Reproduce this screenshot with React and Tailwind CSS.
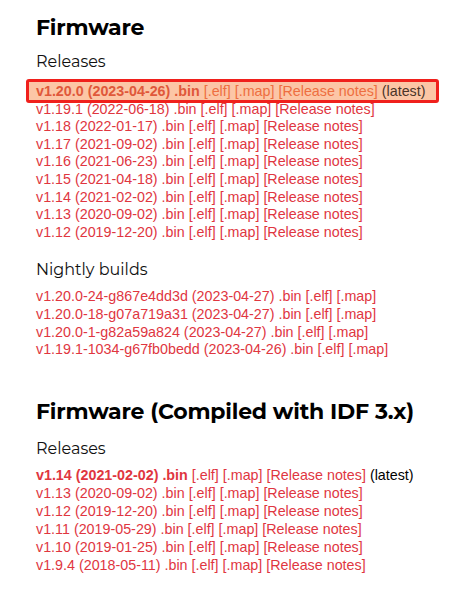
import React from "react";

const LINK = "text-[#e0363f]";

function Row({ v, d, bold, latest, notes = true, hl, h = "h-[17.6px]" }) {
  const lc = hl ? "text-[#ee6e40]" : LINK;
  const vc = hl ? "text-[#e0583a]" : LINK;
  const content = (
    <span className="whitespace-nowrap">
      <span className={`${vc} ${bold ? "font-bold" : ""}`}>
        {v} ({d}) .bin
      </span>{" "}
      <span className={lc}>[.elf]</span> <span className={lc}>[.map]</span>
      {notes && (
        <>
          {" "}
          <span className={lc}>[Release notes]</span>
        </>
      )}
      {latest && (
        <>
          {" "}
          <span className={hl ? "text-[#4a3428]" : "text-black"}>(latest)</span>
        </>
      )}
    </span>
  );
  return (
    <div className={`${h} flex items-center`}>
      {hl ? (
        <div className="-ml-[10px] -my-[3px] h-[24px] pl-[7px] pr-[10px] border-[3px] border-[#f0201c] rounded-[3px] bg-[#fcc6a6] flex items-center w-fit">
          {content}
        </div>
      ) : (
        content
      )}
    </div>
  );
}

export default function App() {
  const h = "font-['Montserrat','Open_Sans',sans-serif] font-bold text-[22px] text-black tracking-[-0.2px]";
  const sub = "font-['Montserrat','Open_Sans',sans-serif] text-[16px] text-[#111]";
  return (
    <div className="w-[459px] h-[593px] bg-white pl-[36px] pt-[13px] font-['Liberation_Sans',Arial,sans-serif] text-[14.3px] leading-[17.6px]">
      <div className={`${h} leading-[30px]`}>Firmware</div>
      <div className={`${sub} mt-[8px] leading-[22px]`}>Releases</div>
      <div className="mt-[9px] flex flex-col">
        <Row v="v1.20.0" d="2023-04-26" bold latest hl h="h-[18.6px]" />
        <Row v="v1.19.1" d="2022-06-18" />
        <Row v="v1.18" d="2022-01-17" />
        <Row v="v1.17" d="2021-09-02" />
        <Row v="v1.16" d="2021-06-23" />
        <Row v="v1.15" d="2021-04-18" />
        <Row v="v1.14" d="2021-02-02" />
        <Row v="v1.13" d="2020-09-02" />
        <Row v="v1.12" d="2019-12-20" />
      </div>
      <div className={`${sub} mt-[18px] leading-[22px]`}>Nightly builds</div>
      <div className="mt-[7px] flex flex-col">
        <Row v="v1.20.0-24-g867e4dd3d" d="2023-04-27" notes={false} h="h-[17.7px]" />
        <Row v="v1.20.0-18-g07a719a31" d="2023-04-27" notes={false} h="h-[17.7px]" />
        <Row v="v1.20.0-1-g82a59a824" d="2023-04-27" notes={false} h="h-[17.7px]" />
        <Row v="v1.19.1-1034-g67fb0bedd" d="2023-04-26" notes={false} h="h-[17.7px]" />
      </div>
      <div className={`${h} leading-[30px] mt-[38px]`}>Firmware (Compiled with IDF 3.x)</div>
      <div className={`${sub} mt-[11px] leading-[22px]`}>Releases</div>
      <div className="mt-[7px] flex flex-col">
        <Row v="v1.14" d="2021-02-02" bold latest h="h-[18px]" />
        <Row v="v1.13" d="2020-09-02" h="h-[18px]" />
        <Row v="v1.12" d="2019-12-20" h="h-[18px]" />
        <Row v="v1.11" d="2019-05-29" h="h-[18px]" />
        <Row v="v1.10" d="2019-01-25" h="h-[18px]" />
        <Row v="v1.9.4" d="2018-05-11" h="h-[18px]" />
      </div>
    </div>
  );
}
